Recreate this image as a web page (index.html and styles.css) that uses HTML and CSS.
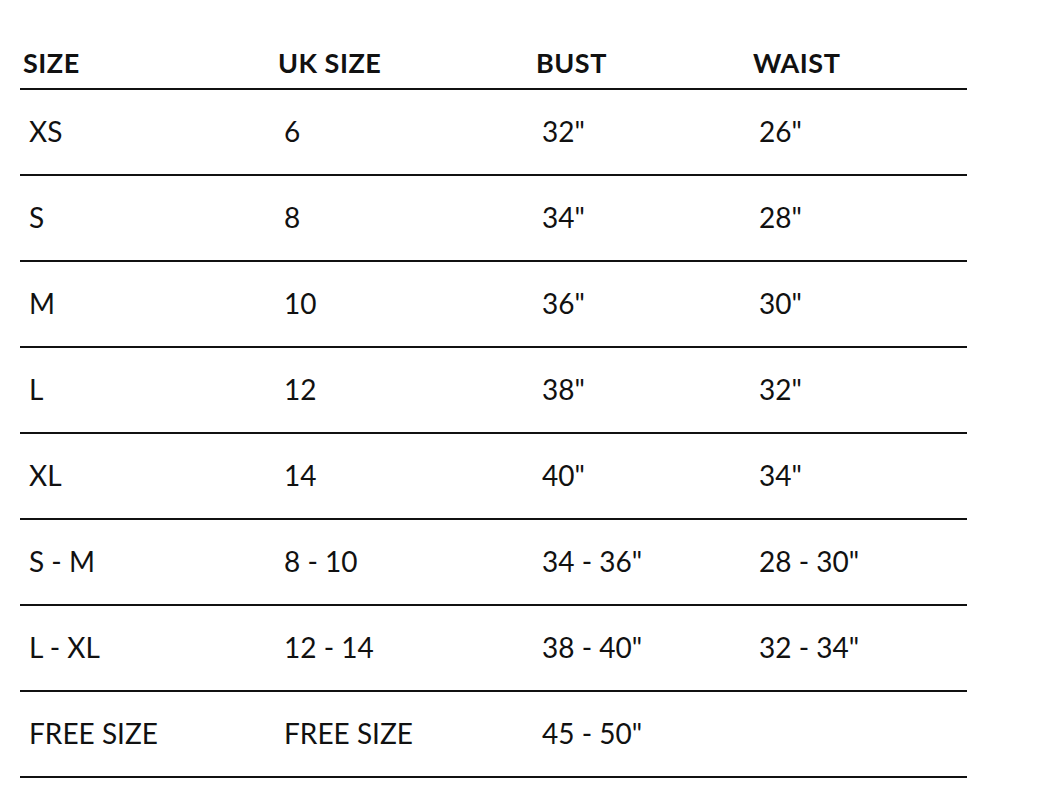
FILE: index.html
```html
<!DOCTYPE html>
<html lang="en">
<head>
<meta charset="utf-8">
<title>Size Chart</title>
<link rel="stylesheet" href="styles.css">
</head>
<body>
<div class="page">
  <table class="chart">
    <colgroup>
      <col class="c1"><col class="c2"><col class="c3"><col class="c4">
    </colgroup>
    <thead>
      <tr><th>SIZE</th><th>UK SIZE</th><th>BUST</th><th>WAIST</th></tr>
    </thead>
    <tbody>
      <tr><td>XS</td><td>6</td><td>32"</td><td>26"</td></tr>
      <tr><td>S</td><td>8</td><td>34"</td><td>28"</td></tr>
      <tr><td>M</td><td>10</td><td>36"</td><td>30"</td></tr>
      <tr><td>L</td><td>12</td><td>38"</td><td>32"</td></tr>
      <tr><td>XL</td><td>14</td><td>40"</td><td>34"</td></tr>
      <tr><td>S - M</td><td>8 - 10</td><td>34 - 36"</td><td>28 - 30"</td></tr>
      <tr><td>L - XL</td><td>12 - 14</td><td>38 - 40"</td><td>32 - 34"</td></tr>
      <tr><td>FREE SIZE</td><td>FREE SIZE</td><td>45 - 50"</td><td></td></tr>
    </tbody>
  </table>
</div>
</body>
</html>
```
FILE: styles.css
```css
html, body {
  margin: 0;
  padding: 0;
  background: #ffffff;
}
body {
  font-family: Lato, "Open Sans", "Liberation Sans", sans-serif;
  color: #111111;
}
.page {
  padding: 20px 0 0 20px;
}
.chart {
  border-collapse: collapse;
  table-layout: fixed;
  width: 947px;
}
.c1 { width: 255px; }
.c2 { width: 258px; }
.c3 { width: 217px; }
.c4 { width: 217px; }
.chart th {
  text-align: left;
  font-weight: 700;
  font-size: 27px;
  letter-spacing: 0.5px;
  line-height: 30px;
  padding: 28px 0 10px 3px;
  border-bottom: 2px solid #111111;
  vertical-align: bottom;
}
.chart td {
  font-size: 28px;
  line-height: 34px;
  height: 86px;
  padding: 0 0 2px 9px;
  box-sizing: border-box;
  vertical-align: middle;
  border-bottom: 2px solid #111111;
}
```
